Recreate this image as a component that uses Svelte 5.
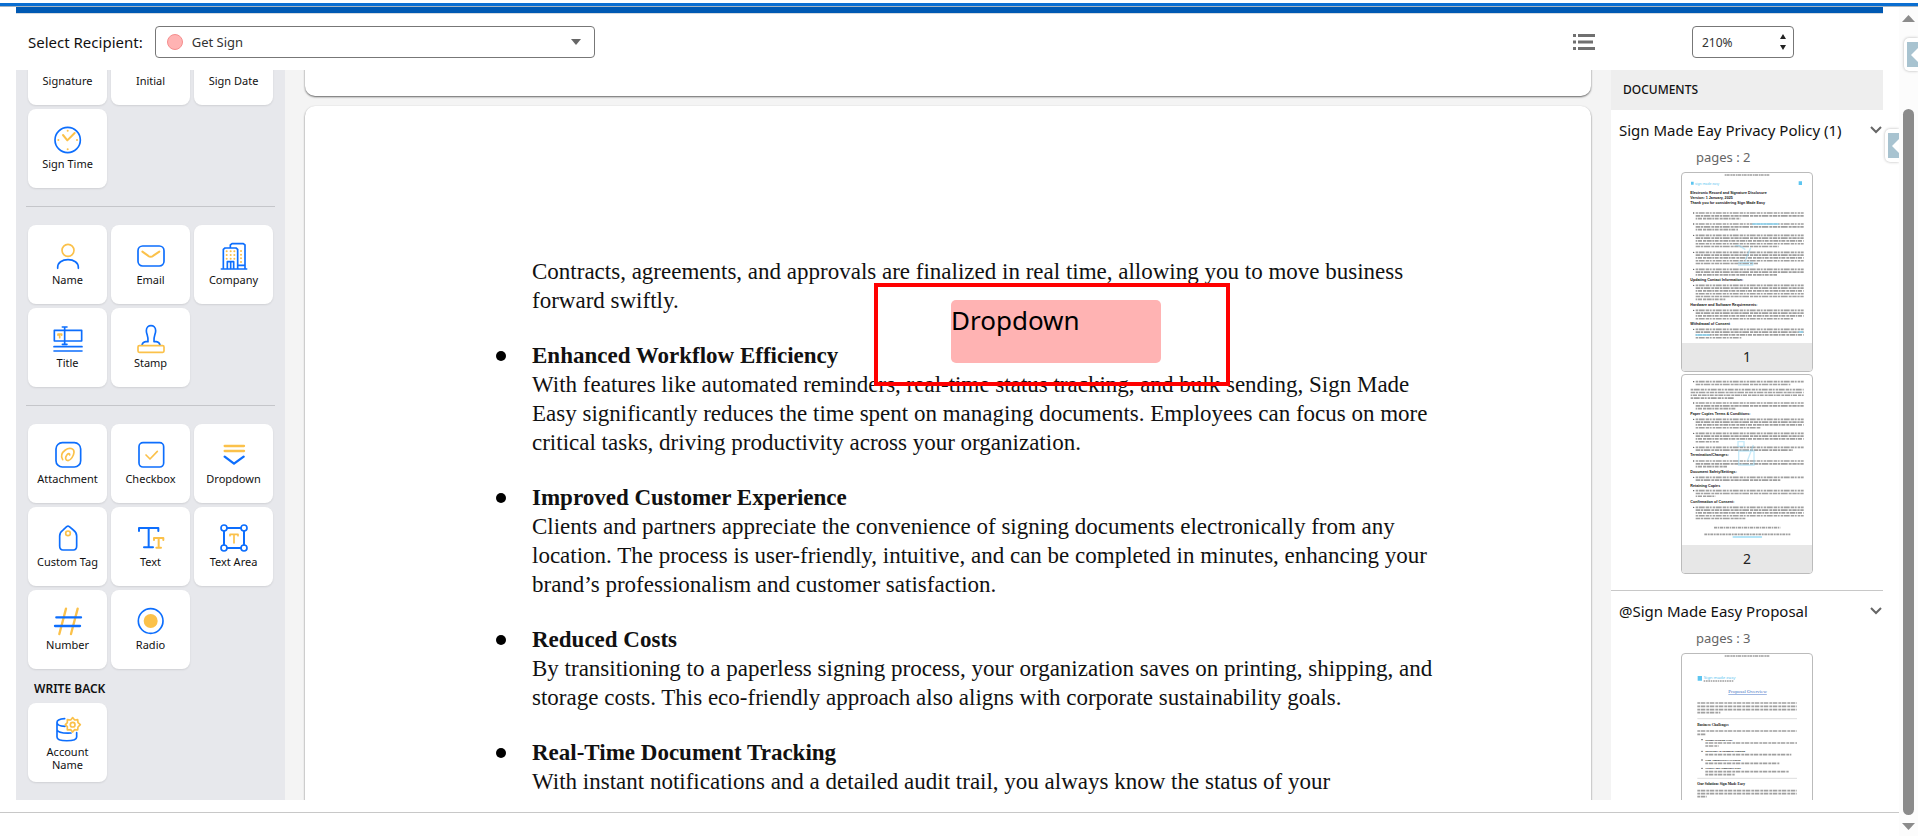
<script lang="ts">
  import { onMount } from 'svelte'

  type Field = { label: string; icon: string }

  const groups: Field[][] = [
    [
      { label: 'Signature', icon: 'signature' },
      { label: 'Initial', icon: 'signature' },
      { label: 'Sign Date', icon: 'signature' },
      { label: 'Sign Time', icon: 'time' }
    ],
    [
      { label: 'Name', icon: 'name' },
      { label: 'Email', icon: 'email' },
      { label: 'Company', icon: 'company' },
      { label: 'Title', icon: 'title' },
      { label: 'Stamp', icon: 'stamp' }
    ],
    [
      { label: 'Attachment', icon: 'attachment' },
      { label: 'Checkbox', icon: 'checkbox' },
      { label: 'Dropdown', icon: 'dropdown' },
      { label: 'Custom Tag', icon: 'tag' },
      { label: 'Text', icon: 'text' },
      { label: 'Text Area', icon: 'textarea' },
      { label: 'Number', icon: 'number' },
      { label: 'Radio', icon: 'radio' }
    ]
  ]

  const points = [
    {
      title: '',
      lines: [
        'Contracts, agreements, and approvals are finalized in real time, allowing you to move business',
        'forward swiftly.'
      ]
    },
    {
      title: 'Enhanced Workflow Efficiency',
      lines: [
        'With features like automated reminders, real-time status tracking, and bulk sending, Sign Made',
        'Easy significantly reduces the time spent on managing documents. Employees can focus on more',
        'critical tasks, driving productivity across your organization.'
      ]
    },
    {
      title: 'Improved Customer Experience',
      lines: [
        'Clients and partners appreciate the convenience of signing documents electronically from any',
        'location. The process is user-friendly, intuitive, and can be completed in minutes, enhancing your',
        'brand’s professionalism and customer satisfaction.'
      ]
    },
    {
      title: 'Reduced Costs',
      lines: [
        'By transitioning to a paperless signing process, your organization saves on printing, shipping, and',
        'storage costs. This eco-friendly approach also aligns with corporate sustainability goals.'
      ]
    },
    {
      title: 'Real-Time Document Tracking',
      lines: ['With instant notifications and a detailed audit trail, you always know the status of your']
    }
  ]

  // Thumbnail content: headings are [y, text], paragraphs are [y, line count, left, last line end]
  type Thumb = { heads: [number, string][]; paras: [number, number, number, number][] }

  const policyOne: Thumb = {
    heads: [
      [63, 'Electronic Record and Signature Disclosure'],
      [78, 'Version: 1 January, 2025'],
      [94, 'Thank you for considering Sign Made Easy'],
      [323, 'Updating Contact Information:'],
      [398, 'Hardware and Software Requirements:'],
      [455, 'Withdrawal of Consent']
    ],
    paras: [
      [120, 3, 41, 175],
      [153, 3, 41, 168],
      [187, 5, 41, 290],
      [238, 5, 41, 228],
      [289, 3, 41, 285],
      [337, 6, 41, 130],
      [412, 4, 41, 333],
      [469, 4, 41, 178]
    ]
  }

  const policyTwo: Thumb = {
    heads: [
      [119, 'Paper Copies Terms & Conditions:'],
      [244, 'Termination/Changes:'],
      [293, 'Document Safety/Settings:'],
      [335, 'Retaining Copies'],
      [383, 'Confirmation of Consent:']
    ],
    paras: [
      [20, 2, 41, 325],
      [44, 4, 26, 155],
      [84, 3, 41, 160],
      [133, 4, 41, 235],
      [175, 4, 41, 110],
      [217, 2, 41, 333],
      [258, 3, 41, 135],
      [307, 2, 41, 295],
      [347, 3, 41, 100],
      [397, 5, 41, 190]
    ]
  }

  let recipient = 'Get Sign'
  let zoom = '210%'
  let sidebar: HTMLElement
  let stage: HTMLElement

  onMount(() => {
    sidebar.scrollTop = 56
    stage.scrollTop = 1648
  })
</script>

{#snippet fieldIcon(name: string)}
  <svg class="icon" viewBox="2 0 84 84" aria-hidden="true">
    {#if name === 'signature'}
      <path class="b" d="M8 76H76" /><path class="y" d="M12 60L60 12L72 24L24 66Z" />
    {:else if name === 'time'}
      <circle class="b" cx="43" cy="42" r="38" />
      <path class="y thick" d="M29 27L42 43L64 21" />
      <path class="y dots" d="M43 14h.1M43 70h.1M15 42h.1M71 42h.1" />
    {:else if name === 'name'}
      <circle class="y" cx="44" cy="25" r="18" />
      <path class="b" d="M13 79V76C13 62 26 53 44 53S75 62 75 76V79" />
    {:else if name === 'email'}
      <rect class="b" x="5" y="12" width="78" height="60" rx="14" />
      <path class="y thick" d="M18 29L35 41Q43 48 51 41L69 29" />
    {:else if name === 'company'}
      <path class="b" d="M6 81H82M12 80V22L17 18H50L55 22V80M33 17V9L38 5H72L77 9V80M24 80V59H43V80M34 59V80M55 70H77" />
      <path class="y dots" d="M22 28h.1M34 28h.1M45 28h.1M22 39h.1M34 39h.1M45 39h.1M22 50h.1M34 50h.1M45 50h.1M65 27h.1M65 38h.1M65 49h.1M65 60h.1" />
    {:else if name === 'title'}
      <path class="b" d="M3 16H85V48H3ZM34 7V58M27 6H41M27 58H41M2 65H86M2 78H86" />
      <path class="y" d="M14 31V27H25V31M19 27V38" />
    {:else if name === 'stamp'}
      <path class="b" d="M35 50C37 35 30 28 30 17C30 -3 58 -3 58 17C58 28 51 35 53 50H60Q69 51 71 60M35 50H28Q19 51 17 60" />
      <rect class="y" x="5" y="62" width="78" height="20" rx="4" />
    {:else if name === 'attachment'}
      <rect class="b" x="8" y="5" width="74" height="73" rx="19" />
      <path class="y" d="M28 56C22 46 24 36 36 27C48 18 63 22 62 34C61 44 53 58 44 59C36 59 35 50 40 43C44 37 50 36 49 42" />
    {:else if name === 'checkbox'}
      <rect class="b" x="8" y="5" width="74" height="73" rx="12" />
      <path class="y" d="M29 42L41 54L63 31" />
    {:else if name === 'dropdown'}
      <path class="y heavy" d="M16 15H74M16 30H74" />
      <path class="b heavy" d="M16 47L44 68L73 47" />
    {:else if name === 'tag'}
      <path class="b" d="M19 36Q19 25 28 19L40 8Q44 5 48 8L60 18Q70 25 70 36V66Q70 78 60 78H29Q19 78 19 66Z" />
      <circle class="y" cx="44" cy="28" r="7" />
    {:else if name === 'text'}
      <path class="b thick" d="M8 21V12H66V21M37 12V70M23 70H50" />
      <path class="y thick" d="M53 48V42H81V48M67 42V71M60 71H74" />
    {:else if name === 'textarea'}
      <path class="b thick" d="M24 12H64M24 72H64M14 22V62M74 22V62" />
      <circle class="b" cx="14" cy="12" r="9" /><circle class="b" cx="74" cy="12" r="9" />
      <circle class="b" cx="14" cy="72" r="9" /><circle class="b" cx="74" cy="72" r="9" />
      <path class="y" d="M32 35V31H56V35M44 31V57" />
    {:else if name === 'number'}
      <path class="y heavy" d="M38 5L18 81M73 5L53 81" />
      <path class="b heavy" d="M9 31H83M5 57H80" />
    {:else if name === 'radio'}
      <circle class="b" cx="43" cy="42" r="37" />
      <circle class="dot" cx="43" cy="42" r="21" />
    {:else if name === 'account'}
      <path class="b" d="M34 14C20 15 11 19 11 25V69C11 84 70 84 70 69V56M11 25C11 33 22 37 35 37M11 47C14 57 30 58 53 57" />
      <path class="y" d="M58 11L64 18L73 17L74 26L81 32L74 39L73 48L64 47L58 54L52 47L42 48L42 38L36 32L42 26L42 17L52 18Z" />
      <circle class="y" cx="58" cy="32" r="7" />
    {/if}
  </svg>
{/snippet}

{#snippet thumbText(thumb: Thumb)}
  {#each thumb.paras as [y, count, left, end]}
    {#if left > 30}
      <circle cx="35" cy={y} r="2" fill="#444" />
    {/if}
    {#each Array(count) as _, i}
      <path
        class="greek"
        stroke-dasharray={['8 2 17 3 11 2 5 3', '13 2 7 2 20 3 9 2', '5 2 12 3 9 2 15 2'][i % 3]}
        d="M{left} {y + i * 8.4}H{i === count - 1 ? end : 365}"
      />
    {/each}
  {/each}
  {#each thumb.heads as [y, text]}
    <text x="25" y={y} class="head">{text}</text>
  {/each}
{/snippet}

{#snippet chevron()}
  <svg class="chevron" viewBox="0 0 14 10" aria-hidden="true"><path d="M2 2L7 7L12 2" /></svg>
{/snippet}

<div class="window">
  <div class="accent"></div>
  <div class="body">
    <div class="frame">
      <div class="editor">
        <header class="toolbar">
          <label for="recipient">Select Recipient:</label>
          <div class="select recipient">
            <span class="swatch"></span>
            <select id="recipient" bind:value={recipient}>
              <option>Get Sign</option>
            </select>
            <svg class="caret" viewBox="0 0 10 6" aria-hidden="true"><path d="M0 0H10L5 6Z" /></svg>
          </div>
          <button class="list" aria-label="List view">
            <svg viewBox="0 0 22 16" aria-hidden="true">
              <path d="M0 1.5H3M5 1.5H22M0 8H3M5 8H20M0 14.5H3M5 14.5H22" />
            </svg>
          </button>
          <div class="select zoom">
            <select aria-label="Zoom" bind:value={zoom}>
              <option>210%</option>
            </select>
            <svg class="stepper" viewBox="0 0 6 16" aria-hidden="true"><path d="M0 5L3 0L6 5ZM0 11L3 16L6 11Z" /></svg>
          </div>
        </header>

        <div class="panes">
          <aside class="sidebar" bind:this={sidebar}>
            {#each groups as group, i}
              {#if i > 0}<hr />{/if}
              <div class="tiles">
                {#each group as field (field.label)}
                  <button class="tile">
                    {@render fieldIcon(field.icon)}
                    <span>{field.label}</span>
                  </button>
                {/each}
              </div>
            {/each}
            <h2>WRITE BACK</h2>
            <div class="tiles">
              <button class="tile">
                {@render fieldIcon('account')}
                <span>Account Name</span>
              </button>
            </div>
          </aside>

          <main class="stage" bind:this={stage}>
            <section class="page"></section>
            <section class="page">
              {#each points as point}
                <article class:bullet={point.title}>
                  {#if point.title}<h3>{point.title}</h3>{/if}
                  {#each point.lines as line}
                    <p>{line}</p>
                  {/each}
                </article>
              {/each}
              <div class="highlight">
                <button class="placed">Dropdown</button>
              </div>
            </section>
          </main>

          <aside class="documents">
            <h2>DOCUMENTS</h2>
            <section class="doc">
              <button class="doc-title">Sign Made Eay Privacy Policy (1){@render chevron()}</button>
              <p class="count">pages : 2</p>
              <figure>
                <svg viewBox="0 0 390 510" aria-hidden="true">
                  <path class="greek" stroke-dasharray="5 1 9 2" d="M128 6H262" />
                  <path class="sky" d="M27 26H35V35H27ZM350 25H360V36H350Z" />
                  <text x="39" y="35" class="brand">sign made easy</text>
                  {@render thumbText(policyOne)}
                  <path class="link" d="M211 153H290M350 477H363M41 486H84" />
                  <path class="mark" d="M160 218H172L190 230M168 268H212V276H168M206 224L190 262" />
                </svg>
                <figcaption>1</figcaption>
              </figure>
              <figure>
                <svg viewBox="0 0 390 510" aria-hidden="true">
                  {@render thumbText(policyTwo)}
                  <path class="mark" d="M168 200H186V214H168ZM170 228H216V270H170ZM214 210L196 258" />
                  <path class="greek" stroke-dasharray="9 2 5 2" d="M96 458H295M67 478H325" />
                  <path class="link" d="M152 486H240" />
                </svg>
                <figcaption>2</figcaption>
              </figure>
            </section>
            <section class="doc">
              <button class="doc-title">@Sign Made Easy Proposal{@render chevron()}</button>
              <p class="count">pages : 3</p>
              <figure>
                <svg viewBox="0 0 390 510" aria-hidden="true">
                  <path class="greek" stroke-dasharray="5 1 9 2" d="M128 6H262" />
                  <path class="sky" d="M47 66H60V80H47Z" />
                  <text x="65" y="76" class="brand large">Sign made easy</text>
                  <path class="greek" stroke-dasharray="5 2" d="M65 81H156" />
                  <text x="139" y="117" class="overview">Proposal Overview</text>
                  <path class="greek" stroke-dasharray="8 2 14 3" d="M46 147H345M46 157H345M46 167H345M46 176H115M46 231H345M46 241H70M70 267H345M70 276H110M70 302H328M70 328H292M70 353H320M70 362H158M46 410H345M46 419H345M46 428H75" />
                  <path class="rule" d="M46 194H345M46 373H345" />
                  <text x="46" y="216" class="head small">Business Challenges</text>
                  <text x="70" y="260" class="head tiny">Manual Tracking Error</text>
                  <text x="70" y="295" class="head tiny">Inefficiency in Document Handling</text>
                  <text x="70" y="321" class="head tiny">High Administrative Overhead</text>
                  <text x="70" y="346" class="head tiny">Security and Compliance Risks</text>
                  <text x="46" y="394" class="head small">Our Solution: Sign Made Easy</text>
                  <path class="y dots bullets" d="M60 257h.1M60 292h.1M60 318h.1M60 343h.1" />
                </svg>
              </figure>
            </section>
          </aside>
        </div>
      </div>
      <button class="tab inner" aria-label="Open panel"><i></i></button>
    </div>
    <div class="scrollbar" aria-hidden="true">
      <svg viewBox="0 0 13 7"><path d="M0 7L6.5 0L13 7Z" /></svg>
      <div class="thumb"></div>
      <svg viewBox="0 0 13 7"><path d="M0 0L6.5 7L13 0Z" /></svg>
    </div>
    <button class="tab outer" aria-label="Open side panel"><i></i></button>
  </div>
</div>

<style>
  :global(body) {
    margin: 0;
    background: #fff;
  }

  .window {
    --blue: #0d6efd;
    --amber: #fbc14a;
    display: flex;
    flex-direction: column;
    height: 100vh;
    overflow: hidden;
    color: #111;
    font-family: 'Noto Sans', 'Open Sans', sans-serif;
    font-size: 12px;
  }

  .window :is(button, select) {
    font-family: inherit;
    color: inherit;
    padding: 0;
    border: none;
    background: none;
    cursor: pointer;
  }

  h2,
  h3,
  p,
  figure {
    margin: 0;
  }

  .accent {
    flex: none;
    height: 3px;
    margin-top: 3px;
    background: #0a6ed1;
    border-bottom: 1px solid #a8b4c0;
  }

  .body {
    position: relative;
    display: flex;
    flex: 1;
    min-height: 0;
  }

  .frame {
    position: relative;
    display: flex;
    flex: 1;
    min-width: 0;
    margin-bottom: 23px;
    padding: 0 16px 12px;
    border-bottom: 1px solid #c8c8c8;
  }

  .editor {
    display: flex;
    flex: 1;
    flex-direction: column;
    min-width: 0;
    border-top: 6px solid #0059b3;
  }

  /* Toolbar */
  .toolbar {
    display: flex;
    align-items: center;
    flex: none;
    height: 57px;
    padding: 0 89px 0 12px;
    border-top: 1px solid #d5dae0;
    box-sizing: border-box;
  }

  .toolbar label {
    font-size: 15px;
  }

  .select {
    position: relative;
    display: flex;
    align-items: center;
  }

  .window .select select {
    width: 100%;
    height: 32px;
    padding-left: 9px;
    border: 1px solid #777;
    border-radius: 4px;
    color: #333;
    font-size: 12px;
    appearance: none;
  }

  .recipient {
    width: 440px;
    margin-left: 12px;
  }

  .window .recipient select {
    padding-left: 36px;
    font-size: 13px;
  }

  .swatch {
    position: absolute;
    left: 12px;
    width: 14px;
    height: 14px;
    border: 1px solid #f58e8e;
    border-radius: 50%;
    background: #ffb3b3;
  }

  .caret {
    position: absolute;
    right: 14px;
    width: 10px;
    height: 6px;
    fill: #666;
    pointer-events: none;
  }

  .list {
    display: flex;
    margin-left: auto;
  }

  .list svg {
    width: 22px;
    height: 16px;
    fill: none;
    stroke: #707070;
    stroke-width: 3;
  }

  .zoom {
    width: 102px;
    margin-left: 97px;
  }

  .stepper {
    position: absolute;
    right: 8px;
    width: 6px;
    height: 16px;
    fill: #222;
    pointer-events: none;
  }

  .panes {
    display: flex;
    flex: 1;
    min-height: 0;
  }

  /* Field palette */
  .sidebar {
    flex: none;
    width: 269px;
    padding: 12px 10px 48px;
    box-sizing: border-box;
    overflow: auto;
    scrollbar-width: none;
    background: #e7e8ec;
  }

  .tiles {
    display: flex;
    flex-wrap: wrap;
    gap: 4px;
    padding: 0 2px;
  }

  .window .tile {
    display: flex;
    flex-direction: column;
    align-items: center;
    justify-content: center;
    gap: 3px;
    width: 79px;
    height: 79px;
    padding: 0 12px 1px;
    border-radius: 8px;
    background: #fff;
    box-shadow: 0 1px 2px rgba(0, 0, 0, 0.1);
    font-size: 11px;
    line-height: 13px;
  }

  .tile span {
    margin: 0 -12px;
  }

  .tile:only-child span {
    margin: 0;
  }

  .icon {
    flex: none;
    width: 28px;
    height: 28px;
    overflow: visible;
  }

  .b,
  .y {
    fill: none;
    stroke: var(--blue);
    stroke-width: 5;
    stroke-linecap: round;
    stroke-linejoin: round;
  }

  .y {
    stroke: var(--amber);
  }

  .thick,
  .dots {
    stroke-width: 6;
  }

  .heavy {
    stroke-width: 7;
  }

  .dot {
    fill: var(--amber);
  }

  hr {
    height: 1px;
    margin: 18px 0;
    border: none;
    background: #c5c6ca;
  }

  .sidebar h2 {
    padding: 12px 8px 6px;
    font-size: 12px;
    font-weight: 600;
    line-height: 16px;
  }

  /* Document pages */
  .stage {
    flex: 1;
    min-width: 0;
    padding: 10px 20px;
    overflow: auto;
    scrollbar-width: none;
    background: #f4f4f4;
  }

  .page {
    position: relative;
    min-height: 1664px;
    margin-bottom: 10px;
    padding: 151px 120px 0 227px;
    box-sizing: border-box;
    border-radius: 10px;
    background: #fff;
    box-shadow: 0 1px 2px rgba(0, 0, 0, 0.6);
    font-family: 'Liberation Serif', 'Times New Roman', serif;
    font-size: 23px;
    line-height: 29px;
  }

  article {
    position: relative;
    margin-bottom: 26px;
    white-space: nowrap;
  }

  .bullet::before {
    position: absolute;
    top: 10px;
    left: -36px;
    width: 10px;
    height: 10px;
    border-radius: 50%;
    background: #000;
    content: '';
  }

  h3 {
    font-size: inherit;
  }

  .highlight {
    position: absolute;
    top: 177px;
    left: 569px;
    width: 356px;
    height: 103px;
    padding: 13px 73px;
    box-sizing: border-box;
    border: 4px solid #f00;
  }

  .window .placed {
    display: block;
    width: 210px;
    height: 63px;
    padding: 0 0 24px;
    border-radius: 5px;
    background: #ffb3b3;
    color: #000;
    font-family: 'Noto Sans', 'Open Sans', sans-serif;
    font-size: 26px;
    line-height: 38px;
    text-align: left;
  }

  /* Documents panel */
  .documents {
    flex: none;
    width: 272px;
    overflow: hidden;
  }

  .documents h2 {
    padding: 0 12px;
    background: #eee;
    font-size: 12px;
    font-weight: 500;
    line-height: 40px;
  }

  .doc {
    display: flex;
    flex-direction: column;
    align-items: center;
    gap: 2px;
    padding-bottom: 16px;
    border-bottom: 1px solid #c8c8c8;
  }

  .window .doc-title {
    display: flex;
    align-items: center;
    justify-content: space-between;
    align-self: stretch;
    height: 40px;
    padding-left: 8px;
    font-size: 15px;
  }

  .chevron {
    width: 14px;
    height: 10px;
    fill: none;
    stroke: #666;
    stroke-width: 2;
  }

  .count {
    width: 102px;
    height: 18px;
    color: #666;
    font-size: 13px;
    line-height: 10px;
  }

  figure {
    width: 130px;
    border: 1px solid #bbb;
    border-radius: 4px;
    overflow: hidden;
    background: #fff;
  }

  figure svg {
    display: block;
    width: 100%;
  }

  figcaption {
    background: #e7e7e7;
    color: #222;
    font-size: 14px;
    line-height: 28px;
    text-align: center;
  }

  .greek {
    fill: none;
    stroke: #a0a0a0;
    stroke-width: 5;
  }

  .link,
  .mark {
    fill: none;
    stroke: #8fd8f5;
    stroke-width: 4;
  }

  .mark {
    opacity: 0.5;
  }

  .sky {
    fill: #5cc5f0;
  }

  .rule {
    stroke: #ccc;
    stroke-width: 2;
  }

  .brand {
    fill: #5cc5f0;
    font-size: 10px;
  }

  .large {
    font-size: 13px;
  }

  .overview {
    fill: #4472c4;
    font-family: 'Liberation Serif', serif;
    font-size: 15px;
    text-decoration: underline;
  }

  .head {
    fill: #111;
    font-family: 'Liberation Sans', sans-serif;
    font-size: 11px;
    font-weight: 700;
  }

  .small {
    font-family: 'Liberation Serif', serif;
  }

  .tiny {
    font-family: 'Liberation Serif', serif;
    font-size: 8px;
  }

  .bullets {
    stroke: #333;
    stroke-width: 4;
  }

  /* Window edge */
  .scrollbar {
    display: flex;
    flex: none;
    flex-direction: column;
    align-items: center;
    width: 19px;
    padding: 8px 0 6px;
    box-sizing: border-box;
    background: #fcfcfc;
  }

  .scrollbar svg {
    flex: none;
    width: 13px;
    height: 7px;
    fill: #8b8b8b;
  }

  .thumb {
    flex: 1;
    width: 11px;
    margin: 87px 0 8px;
    border-radius: 6px;
    background: #8b8b8b;
  }

  .window .tab {
    position: absolute;
    right: 0;
    width: 14px;
    height: 33px;
    padding: 4px 0 4px 3px;
    border-radius: 5px 0 0 5px;
    background: #fff;
    box-shadow: 0 0 3px rgba(0, 0, 0, 0.3);
    clip-path: inset(-4px 0 -4px -4px);
  }

  .inner {
    top: 122px;
  }

  .outer {
    top: 31px;
  }

  .tab i {
    display: flex;
    align-items: center;
    justify-content: flex-end;
    height: 25px;
    background: #a8c3d0;
  }

  .tab i::before {
    border: 7px solid transparent;
    border-left: none;
    border-right-color: #fff;
    content: '';
  }
</style>
